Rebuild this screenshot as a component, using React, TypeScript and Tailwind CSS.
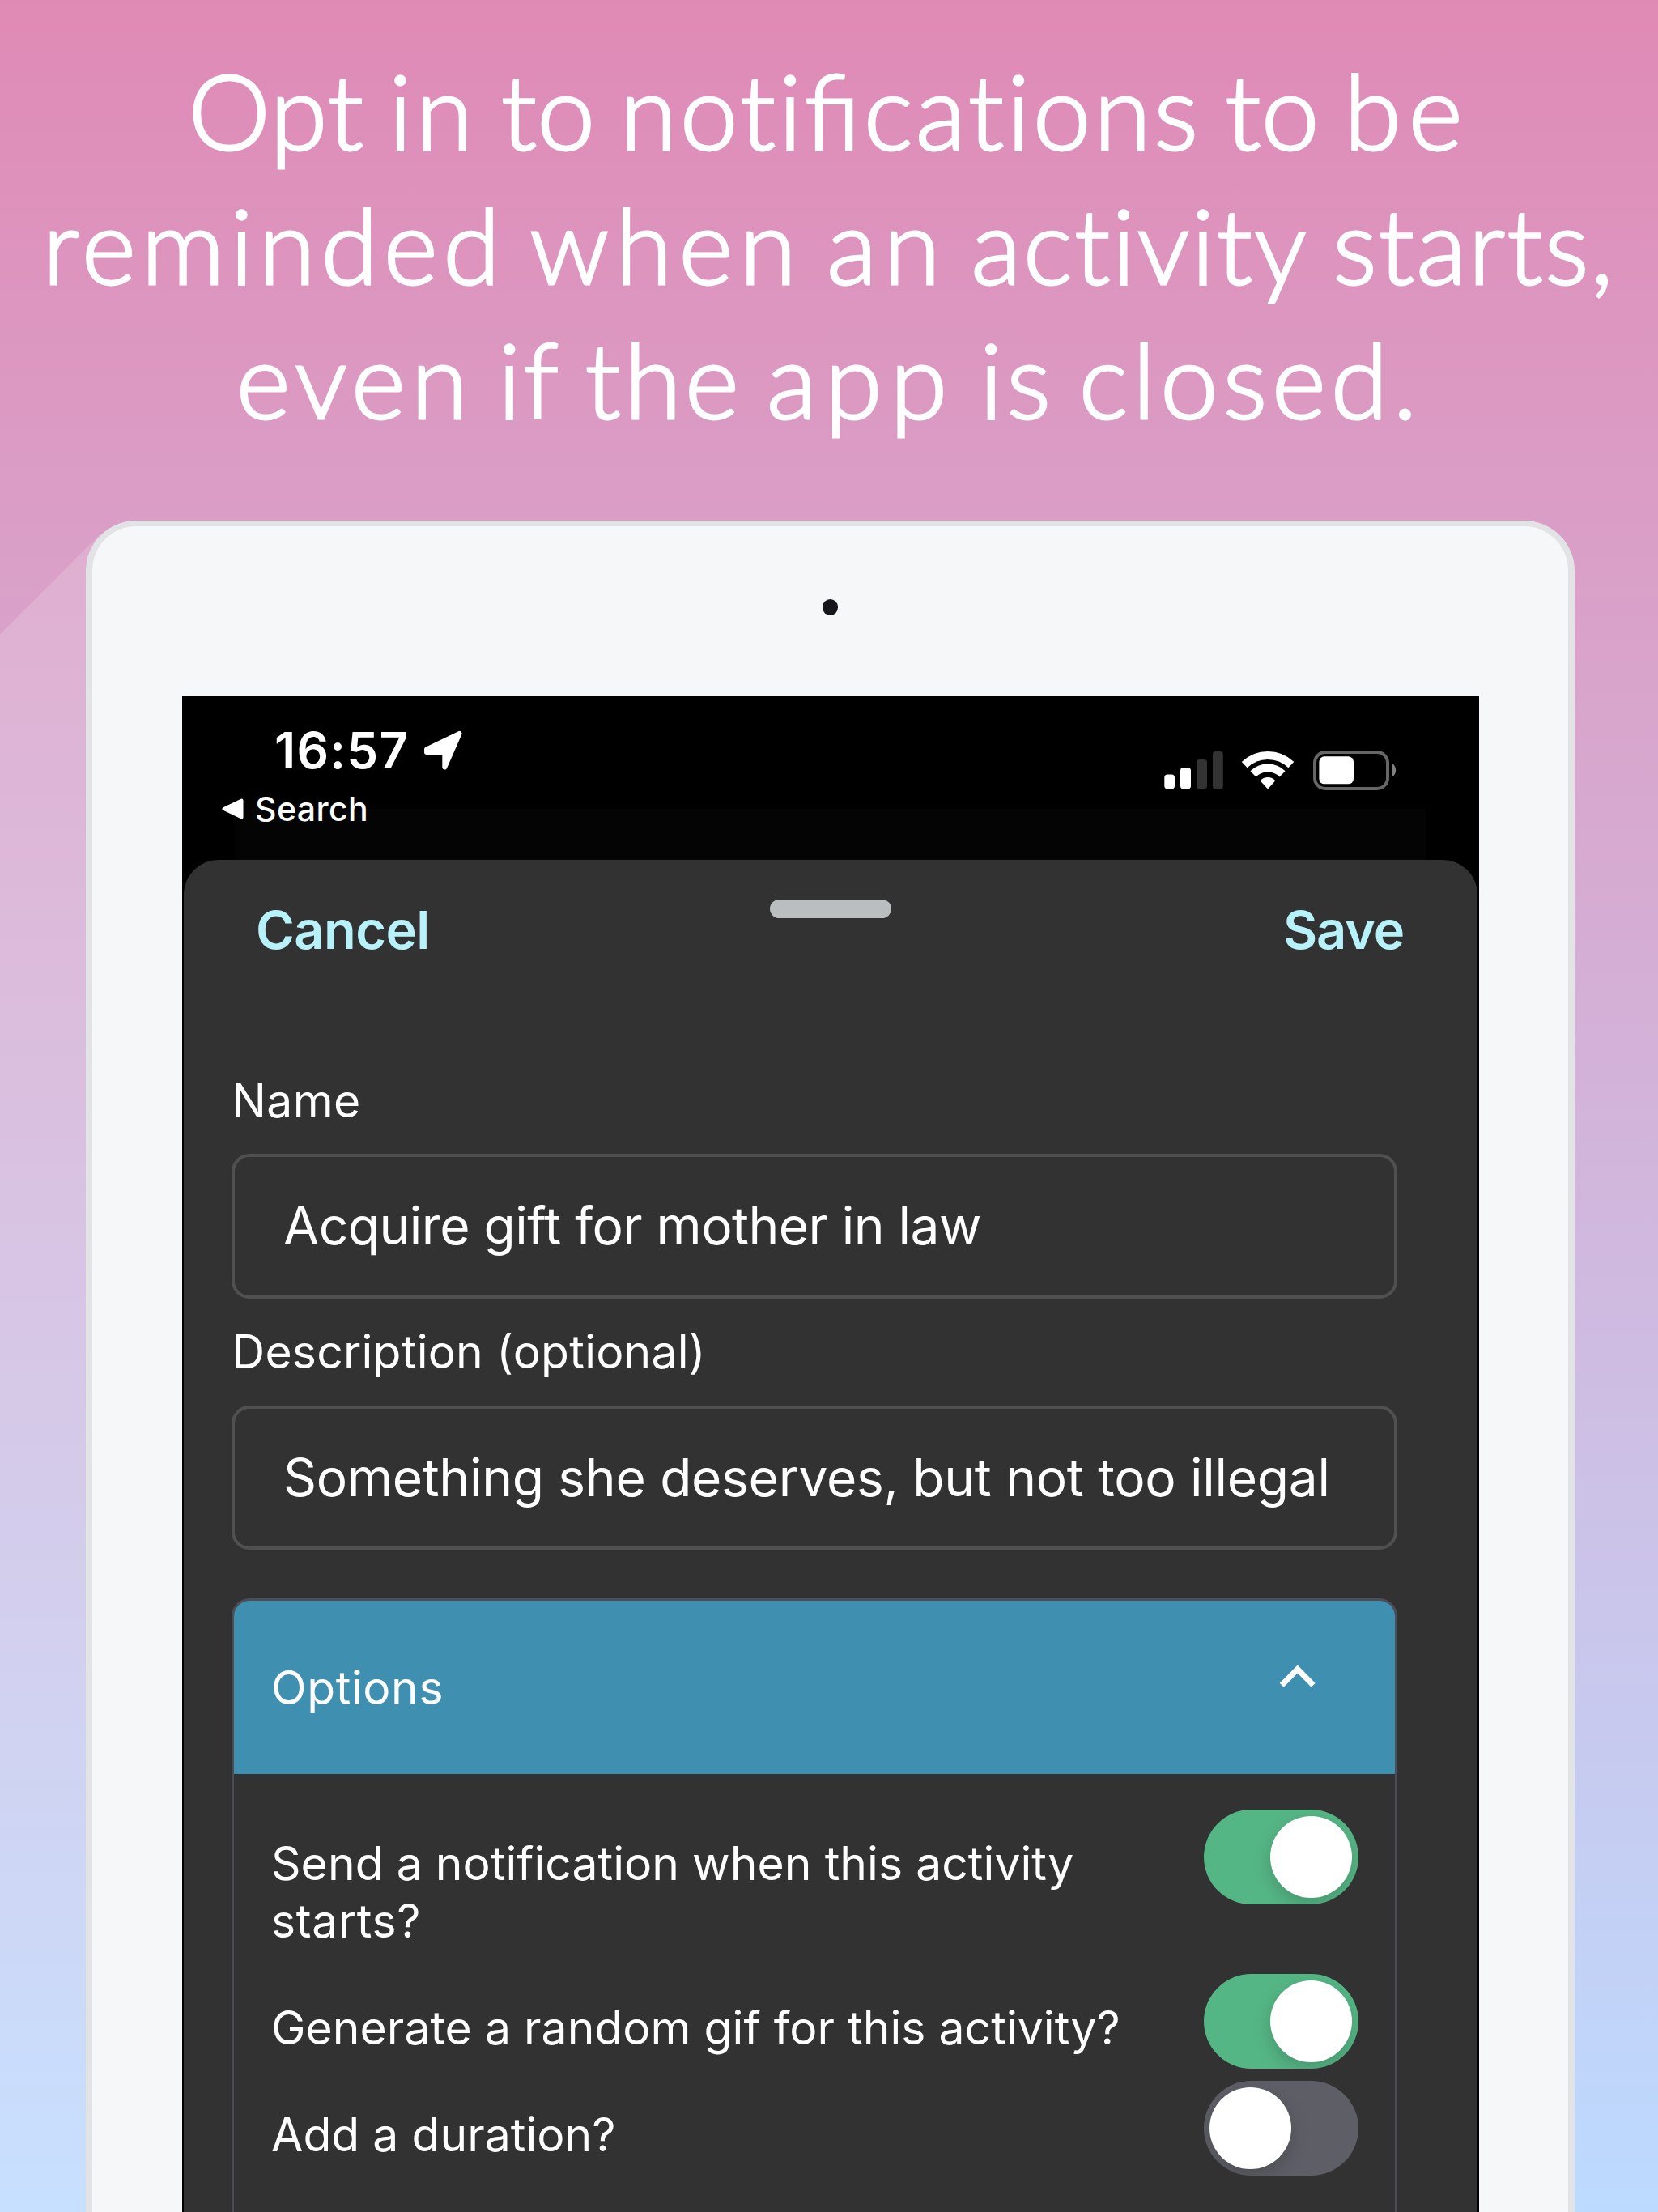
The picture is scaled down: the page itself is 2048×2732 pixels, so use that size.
import type { ReactNode } from 'react';

function LocationArrow() {
  return (
    <svg className="h-[50px] w-[50px]" viewBox="0 0 50 50" fill="#fff">
      <path
        d="M4 23.5 44.5 4 26.3 45.5V27H4Z"
        stroke="#fff"
        strokeWidth="6"
        strokeLinejoin="round"
      />
    </svg>
  );
}

function SignalBars() {
  return (
    <svg className="h-[48px] w-[73px]" viewBox="0 0 73 48">
      <rect x="0.3" y="29.5" width="12.7" height="18" rx="4" fill="#fff" />
      <rect x="20" y="21" width="13" height="26.5" rx="4" fill="#fff" />
      <rect x="40.2" y="11" width="12.8" height="36.5" rx="4" fill="#333" />
      <rect x="60" y="1" width="12.8" height="46.5" rx="4" fill="#333" />
    </svg>
  );
}

function Wifi() {
  return (
    <svg className="h-[48px] w-[64px]" viewBox="0 0 64 48" fill="none" stroke="#fff" strokeWidth="10">
      <path d="M3.2 17.6A41.5 41.5 0 0 1 60.8 17.6" />
      <path d="M13.9 28.8A26 26 0 0 1 50.1 28.8" />
      <path d="M32 47.5 22.6 37.3Q26.3 33 32 33T41.4 37.3Z" fill="#fff" stroke="none" />
    </svg>
  );
}

function Battery() {
  return (
    <svg className="h-[49px] w-[103px]" viewBox="0 0 103 49">
      <rect x="2" y="2" width="90" height="45" rx="13" fill="none" stroke="#666" strokeWidth="4" />
      <rect x="7.4" y="7.3" width="42.6" height="34" rx="6.5" fill="#fff" />
      <path d="M97.5 16.3C103.7 19 103.7 29.6 97.5 32.3Z" fill="#808080" />
    </svg>
  );
}

function Toggle({ on }: { on?: boolean }) {
  return (
    <div
      className={
        on
          ? 'flex h-[117px] w-[191px] shrink-0 items-center justify-end overflow-hidden rounded-full bg-[#55b685] px-[8px]'
          : 'flex h-[117px] w-[191px] shrink-0 items-center overflow-hidden rounded-full bg-[#5e5e66] px-[7px]'
      }
    >
      <div className="size-[101px] rounded-full bg-white shadow-[0_8px_22px_rgba(0,0,0,0.18)]" />
    </div>
  );
}

function Field({
  label,
  labelClass,
  value,
  valueClass,
}: {
  label: string;
  labelClass: string;
  value: string;
  valueClass: string;
}) {
  return (
    <div className="flex flex-col">
      <div className={`h-[70px] text-[57px] leading-[70px] ${labelClass}`}>{label}</div>
      <div className="flex h-[178.5px] items-center rounded-[22px] border-4 border-[#505050] pl-[60px]">
        <span className={`whitespace-nowrap text-[64px] leading-[80px] ${valueClass}`}>{value}</span>
      </div>
    </div>
  );
}

function OptionRow({ children, on, className }: { children: ReactNode; on?: boolean; className: string }) {
  return (
    <div className={`flex items-start justify-between ${className}`}>
      <div className="whitespace-nowrap pt-[31px] text-[57px] leading-[71px] tracking-[0.05px]">{children}</div>
      <Toggle on={on} />
    </div>
  );
}

export default function App() {
  return (
    <div className="relative flex h-[2732px] w-[2048px] flex-col overflow-hidden bg-linear-to-b from-[#df8ab5] to-[#bcdaff] font-['Inter',sans-serif] text-white">
      {/* light beam cast from the device corner */}
      <svg className="absolute top-0 left-0 h-[2732px] w-[300px]" viewBox="0 0 300 2732">
        <path d="M0 783.5 124 659.5 300 659.5V2732H0Z" fill="#fff" fillOpacity="0.17" />
      </svg>

      <h1 className="flex h-[643px] shrink-0 flex-col items-center whitespace-nowrap pt-[53px] font-['Lato',sans-serif] text-[128px] leading-[166px] font-light [-webkit-text-stroke:3px_white] [word-spacing:-5px]">
        <span>
          <span className="tracking-[1.5px]">Opt</span> <span className="tracking-[5px]">in</span>{' '}
          <span className="tracking-[1px]">to</span>{' '}
          <span className="tracking-[3.8px]">
            noti<span className="mr-[4px] tracking-normal">fi</span>cations
          </span>{' '}
          <span className="tracking-[1px]">to</span> <span className="tracking-[9px]">be</span>
        </span>
        <span>
          <span className="tracking-[6.7px]">reminded</span> <span className="tracking-[8px]">when</span>{' '}
          <span className="tracking-[8px]">an</span> <span className="tracking-[2.7px]">activity</span>{' '}
          <span className="tracking-[2.5px]">starts,</span>
        </span>
        <span>
          <span className="tracking-[7px]">even</span> <span className="tracking-[3px]">if</span>{' '}
          <span className="tracking-[4.5px]">the</span> <span className="tracking-[10px]">app</span>{' '}
          <span className="tracking-[5px]">is</span> <span className="tracking-[6px]">closed.</span>
        </span>
      </h1>

      <div className="relative ml-[105.5px] flex h-[2200px] w-[1839px] shrink-0 flex-col rounded-[62px] border-[8px] border-t-[7px] border-[#e1e3e5] bg-[#f6f7f9]">
        <div className="mx-auto mt-[90px] h-[20px] w-[19px] shrink-0 rounded-full bg-[#17171b]" />

        <div className="mt-[100px] ml-[111.5px] flex w-[1602px] grow flex-col bg-black">
          <div className="relative flex h-[202px] shrink-0 items-start justify-between">
            <div className="absolute bottom-0 left-[65px] h-[63px] w-[1472px] bg-[#040404]" />
            <div className="relative flex flex-col gap-[12px] pt-[32px]">
              <div className="flex h-[70px] items-center gap-[18px] pl-[114px]">
                <span className="text-[62px] leading-[70px] font-semibold tracking-[1.2px]">16:57</span>
                <LocationArrow />
              </div>
              <div className="flex h-[50px] items-center gap-[14px] pl-[49px]">
                <svg className="h-[28px] w-[27px]" viewBox="0 0 27 28">
                  <path
                    d="M2.5 14 24.5 3.500V24.500Z"
                    fill="#fff"
                    stroke="#fff"
                    strokeWidth="4"
                    strokeLinejoin="round"
                  />
                </svg>
                <span className="text-[41px] leading-[50px] font-medium tracking-[0.4px]">Search</span>
              </div>
            </div>
            <div className="relative flex items-start pt-[67px] pr-[102px]">
              <SignalBars />
              <div className="ml-[23px]">
                <Wifi />
              </div>
              <div className="ml-[24px]">
                <Battery />
              </div>
            </div>
          </div>

          <div className="mx-[2px] flex grow flex-col rounded-t-[43px] bg-[#323232] pt-[47px]">
            <div className="grid grid-cols-[1fr_150px_1fr] text-[65px] leading-[80px] font-semibold text-[#b7f1f9]">
              <span className="pl-[89px] tracking-[-0.6px]">Cancel</span>
              <div className="mt-[2px] h-[23px] rounded-full bg-[#babebe]" />
              <span className="pr-[91px] text-right tracking-[-1.2px]">Save</span>
            </div>

            <div className="ml-[59px] flex w-[1440px] grow flex-col pt-[136px]">
              <div className="flex flex-col gap-[31px]">
                <Field
                  label="Name"
                  labelClass="mb-[30px] tracking-[0.4px]"
                  value="Acquire gift for mother in law"
                  valueClass="tracking-[-0.5px]"
                />
                <Field
                  label="Description (optional)"
                  labelClass="mb-[31px] tracking-[0.24px]"
                  value="Something she deserves, but not too illegal"
                  valueClass="tracking-[-0.28px]"
                />
              </div>

              <div className="mt-[60px] flex grow flex-col overflow-hidden rounded-t-[22px] border-[3px] border-b-0 border-[#4d4d55]">
                <div className="flex h-[214px] shrink-0 items-start justify-between bg-[#3f8fb0] pr-[95px] pl-[46px]">
                  <span className="pt-[73px] text-[57px] leading-[70px] tracking-[0.6px]">Options</span>
                  <svg
                    className="mt-[77px] h-[32px] w-[50px]"
                    viewBox="0 0 50 32"
                    fill="none"
                    stroke="#fff"
                    strokeWidth="7"
                  >
                    <path d="M5.2 27.2 24.7 7.500 44.200 27.200" />
                  </svg>
                </div>
                <div className="flex flex-col pt-[44px] pr-[45px] pl-[46px]">
                  <OptionRow on className="h-[203px]">
                    Send a notification when this activity
                    <br />
                    <span className="tracking-[0.6px]">starts?</span>
                  </OptionRow>
                  <OptionRow on className="h-[132px]">
                    Generate a random gif for this activity?
                  </OptionRow>
                  <OptionRow className="h-[132px]">Add a duration?</OptionRow>
                </div>
              </div>
            </div>
          </div>
        </div>
      </div>
    </div>
  );
}
